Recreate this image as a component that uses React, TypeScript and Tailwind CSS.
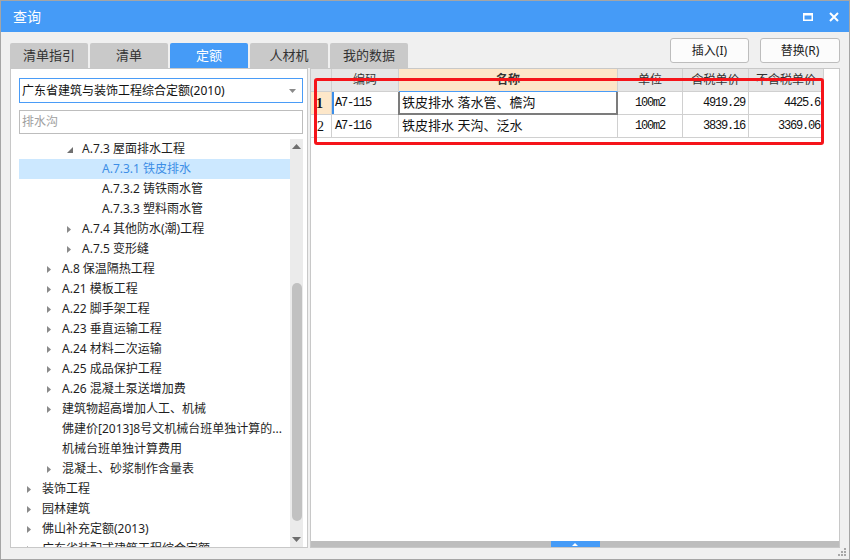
import React from 'react';

type Node = { t: string; lvl: number; arrow: 'open' | 'closed' | 'none'; sel?: boolean };

const tree: Node[] = [
  { t: 'A.7.3 屋面排水工程', lvl: 2, arrow: 'open' },
  { t: 'A.7.3.1 铁皮排水', lvl: 3, arrow: 'none', sel: true },
  { t: 'A.7.3.2 铸铁雨水管', lvl: 3, arrow: 'none' },
  { t: 'A.7.3.3 塑料雨水管', lvl: 3, arrow: 'none' },
  { t: 'A.7.4 其他防水(潮)工程', lvl: 2, arrow: 'closed' },
  { t: 'A.7.5 变形缝', lvl: 2, arrow: 'closed' },
  { t: 'A.8 保温隔热工程', lvl: 1, arrow: 'closed' },
  { t: 'A.21 模板工程', lvl: 1, arrow: 'closed' },
  { t: 'A.22 脚手架工程', lvl: 1, arrow: 'closed' },
  { t: 'A.23 垂直运输工程', lvl: 1, arrow: 'closed' },
  { t: 'A.24 材料二次运输', lvl: 1, arrow: 'closed' },
  { t: 'A.25 成品保护工程', lvl: 1, arrow: 'closed' },
  { t: 'A.26 混凝土泵送增加费', lvl: 1, arrow: 'closed' },
  { t: '建筑物超高增加人工、机械', lvl: 1, arrow: 'closed' },
  { t: '佛建价[2013]8号文机械台班单独计算的...', lvl: 1, arrow: 'none' },
  { t: '机械台班单独计算费用', lvl: 1, arrow: 'none' },
  { t: '混凝土、砂浆制作含量表', lvl: 1, arrow: 'closed' },
  { t: '装饰工程', lvl: 0, arrow: 'closed' },
  { t: '园林建筑', lvl: 0, arrow: 'closed' },
  { t: '佛山补充定额(2013)', lvl: 0, arrow: 'closed' },
  { t: '广东省装配式建筑工程综合定额', lvl: 0, arrow: 'closed' },
];

const indent = ['pl-[8px]', 'pl-[28px]', 'pl-[48px]', 'pl-[68px]'];

function Arrow({ kind }: { kind: Node['arrow'] }) {
  if (kind === 'open')
    return (
      <svg width="6" height="6" viewBox="0 0 6 6" className="mt-[1px]">
        <path d="M6 0V6H0Z" fill="#707070" />
      </svg>
    );
  if (kind === 'closed')
    return (
      <svg width="4" height="7" viewBox="0 0 4 7">
        <path d="M0 0L4 3.5L0 7Z" fill="#8a8a8a" />
      </svg>
    );
  return null;
}

const tabs = ['清单指引', '清单', '定额', '人材机', '我的数据'];

const mono = "font-['Liberation_Mono',monospace] text-[12px] tracking-[-1.2px]";

export default function App() {
  return (
    <div className="w-[850px] h-[560px] border border-[#a5a5a5] bg-[#f0f0f0] flex flex-col relative font-['Noto_Sans','Noto_Sans_CJK_SC',sans-serif] text-[#222] overflow-hidden">
      {/* title bar */}
      <div className="h-[31px] bg-[#459bf7] flex items-center pl-[12px] pr-[10px] shrink-0">
        <span className="text-white text-[14px] leading-none">查询</span>
        <div className="flex-1" />
        <svg width="10" height="8" viewBox="0 0 10 8" className="mr-[16px]">
          <rect x="0.75" y="1" width="8.5" height="6.25" fill="none" stroke="#fff" strokeWidth="1.5" />
          <rect x="0" y="0" width="10" height="2.5" fill="#fff" />
        </svg>
        <svg width="10" height="10" viewBox="0 0 10 10">
          <path d="M1 1L9 9M9 1L1 9" stroke="#fff" strokeWidth="2" />
        </svg>
      </div>

      {/* header row: tabs + buttons */}
      <div className="h-[36px] shrink-0 flex px-[9px]">
        <div className="flex gap-[2px] self-end">
          {tabs.map((t, i) => (
            <div
              key={t}
              className={
                i === 2
                  ? 'w-[78px] h-[25px] rounded-t-[2px] bg-[#459bf7] text-white text-[13px] flex items-center justify-center'
                  : 'w-[78px] h-[25px] rounded-t-[2px] bg-[#c9c9c9] text-[#333] text-[13px] flex items-center justify-center'
              }
            >
              {t}
            </div>
          ))}
        </div>
        <div className="flex-1" />
        <div className="flex gap-[11px] mt-[6px] self-start">
          <div className="w-[79px] h-[25px] border border-[#bdbdbd] rounded-[3px] bg-[#fcfcfc] text-[12px] flex items-center justify-center">插入(I)</div>
          <div className="w-[80px] h-[25px] border border-[#bdbdbd] rounded-[3px] bg-[#fcfcfc] text-[12px] flex items-center justify-center">替换(R)</div>
        </div>
      </div>

      {/* panels */}
      <div className="h-[480px] shrink-0 flex gap-[2px] px-[9px]">
        {/* left panel */}
        <div className="w-[298px] border border-[#c8c8c8] bg-white flex flex-col pt-[9px] pl-[8px] pr-[4px]">
          <div className="h-[25px] border border-[#4a9cf7] flex items-center pl-[2px] pr-[6px] text-[12px] text-[#111] shrink-0">
            <span className="flex-1 whitespace-nowrap">广东省建筑与装饰工程综合定额(2010)</span>
            <svg width="7" height="4" viewBox="0 0 7 4">
              <path d="M0 0H7L3.5 4Z" fill="#8a8a8a" />
            </svg>
          </div>
          <div className="h-[24px] mt-[7px] border border-[#bdbdbd] flex items-center pl-[2px] text-[12px] text-[#a0a0a0] shrink-0">
            排水沟
          </div>
          <div className="flex-1 mt-[5px] flex overflow-hidden">
            <div className="flex-1 overflow-hidden">
              {tree.map((n, i) => (
                <div
                  key={i}
                  className={
                    'h-[20px] flex items-center whitespace-nowrap text-[12px] leading-[20px] ' +
                    indent[n.lvl] +
                    (n.sel ? ' bg-[#cce8ff] text-[#3d8ee6]' : ' text-[#1f1f1f]')
                  }
                >
                  <div className="w-[15px] flex items-center shrink-0">
                    <Arrow kind={n.arrow} />
                  </div>
                  <span>{n.t}</span>
                </div>
              ))}
            </div>
            {/* scrollbar */}
            <div className="w-[13px] bg-[#ebebeb] flex flex-col items-center shrink-0">
              <div className="h-[10px] flex items-end justify-center">
                <svg width="9" height="5" viewBox="0 0 9 5">
                  <path d="M0 5L4.5 0L9 5Z" fill="#6e6e6e" />
                </svg>
              </div>
              <div className="w-[10px] h-[238px] mt-[134px] rounded-full bg-[#c1c1c1]" />
              <div className="flex-1" />
              <div className="h-[10px] flex items-start justify-center">
                <svg width="9" height="5" viewBox="0 0 9 5">
                  <path d="M0 0L9 0L4.5 5Z" fill="#6e6e6e" />
                </svg>
              </div>
            </div>
          </div>
        </div>

        {/* right panel */}
        <div className="w-[530px] border border-[#c8c8c8] bg-white flex flex-col relative">
          <div className="flex-1 overflow-hidden">
            {/* header */}
            <div className="flex h-[23px] text-[12px] text-[#333]">
              <div className="w-[21px] border-r border-b border-[#d0d0d0] bg-[#e6e6e6]" />
              <div className="w-[67px] border-r border-b border-[#d0d0d0] bg-[#e6e6e6] flex items-center justify-center">编码</div>
              <div className="w-[219px] border-r border-b border-[#d0d0d0] border-b-[#4a9cf7] bg-[#fde6c8] flex items-center justify-center font-bold">名称</div>
              <div className="w-[65px] border-r border-b border-[#d0d0d0] bg-[#e6e6e6] flex items-center justify-center">单位</div>
              <div className="w-[66px] border-r border-b border-[#d0d0d0] bg-[#e6e6e6] flex items-center justify-center">含税单价</div>
              <div className="w-[75px] border-r border-b border-[#d0d0d0] bg-[#e6e6e6] flex items-center justify-center">不含税单价</div>
            </div>
            {/* row 1 */}
            <div className="flex h-[23px] text-[#111]">
              <div className="w-[21px] border-r border-b border-[#d0d0d0] bg-[#fde7c9] flex items-center pl-[5px] font-['Liberation_Serif',serif] font-bold text-[14px]">1</div>
              <div className={'w-[67px] border-r border-b border-[#d0d0d0] flex items-center pl-[3px] relative ' + mono}>
                <div className="absolute left-0 top-0 bottom-0 w-[2px] bg-[#3b8eea]" />
                A7-115
              </div>
              <div className="w-[219px] border-r border-b border-[#d0d0d0] flex items-center pl-[3px] text-[13px] relative whitespace-nowrap">
                <div className="absolute -left-[1px] -right-[1px] top-0 -bottom-[1px] border-x-2 border-b-2 border-[#7c7c7c]" />
                铁皮排水 落水管、檐沟
              </div>
              <div className={'w-[65px] border-r border-b border-[#d0d0d0] flex items-center justify-center ' + mono}>100m2</div>
              <div className={'w-[66px] border-r border-b border-[#d0d0d0] flex items-center justify-end pr-[3px] ' + mono}>4919.29</div>
              <div className={'w-[75px] border-r border-b border-[#d0d0d0] flex items-center justify-end pr-[3px] ' + mono}>4425.6</div>
            </div>
            {/* row 2 */}
            <div className="flex h-[23px] text-[#111]">
              <div className="w-[21px] border-r border-b border-[#d0d0d0] flex items-center pl-[6px] font-['Liberation_Serif',serif] text-[14px]">2</div>
              <div className={'w-[67px] border-r border-b border-[#d0d0d0] flex items-center pl-[3px] ' + mono}>A7-116</div>
              <div className="w-[219px] border-r border-b border-[#d0d0d0] flex items-center pl-[3px] text-[13px] whitespace-nowrap">铁皮排水 天沟、泛水</div>
              <div className={'w-[65px] border-r border-b border-[#d0d0d0] flex items-center justify-center ' + mono}>100m2</div>
              <div className={'w-[66px] border-r border-b border-[#d0d0d0] flex items-center justify-end pr-[3px] ' + mono}>3839.16</div>
              <div className={'w-[75px] border-r border-b border-[#d0d0d0] flex items-center justify-end pr-[3px] ' + mono}>3369.06</div>
            </div>
          </div>
          {/* splitter */}
          <div className="h-[6px] bg-[#bdbdbd] flex justify-center shrink-0">
            <div className="w-[49px] bg-[#459bf7] flex items-center justify-center">
              <svg width="6" height="3" viewBox="0 0 6 3">
                <path d="M0 3L3 0L6 3Z" fill="#fff" />
              </svg>
            </div>
          </div>
          {/* red annotation */}
          <div className="absolute left-[3px] top-[9px] w-[510px] h-[67px] border-[3px] border-[#f5141a] rounded-[3px] pointer-events-none" />
        </div>
      </div>

      <div className="flex-1" />
      {/* resize grip */}
      <svg width="9" height="9" viewBox="0 0 9 9" className="absolute right-[2px] bottom-[2px]">
        <rect x="6" y="0" width="2" height="2" fill="#a8a8a8" />
        <rect x="3" y="3" width="2" height="2" fill="#a8a8a8" />
        <rect x="6" y="3" width="2" height="2" fill="#a8a8a8" />
        <rect x="0" y="6" width="2" height="2" fill="#a8a8a8" />
        <rect x="3" y="6" width="2" height="2" fill="#a8a8a8" />
        <rect x="6" y="6" width="2" height="2" fill="#a8a8a8" />
      </svg>
    </div>
  );
}
